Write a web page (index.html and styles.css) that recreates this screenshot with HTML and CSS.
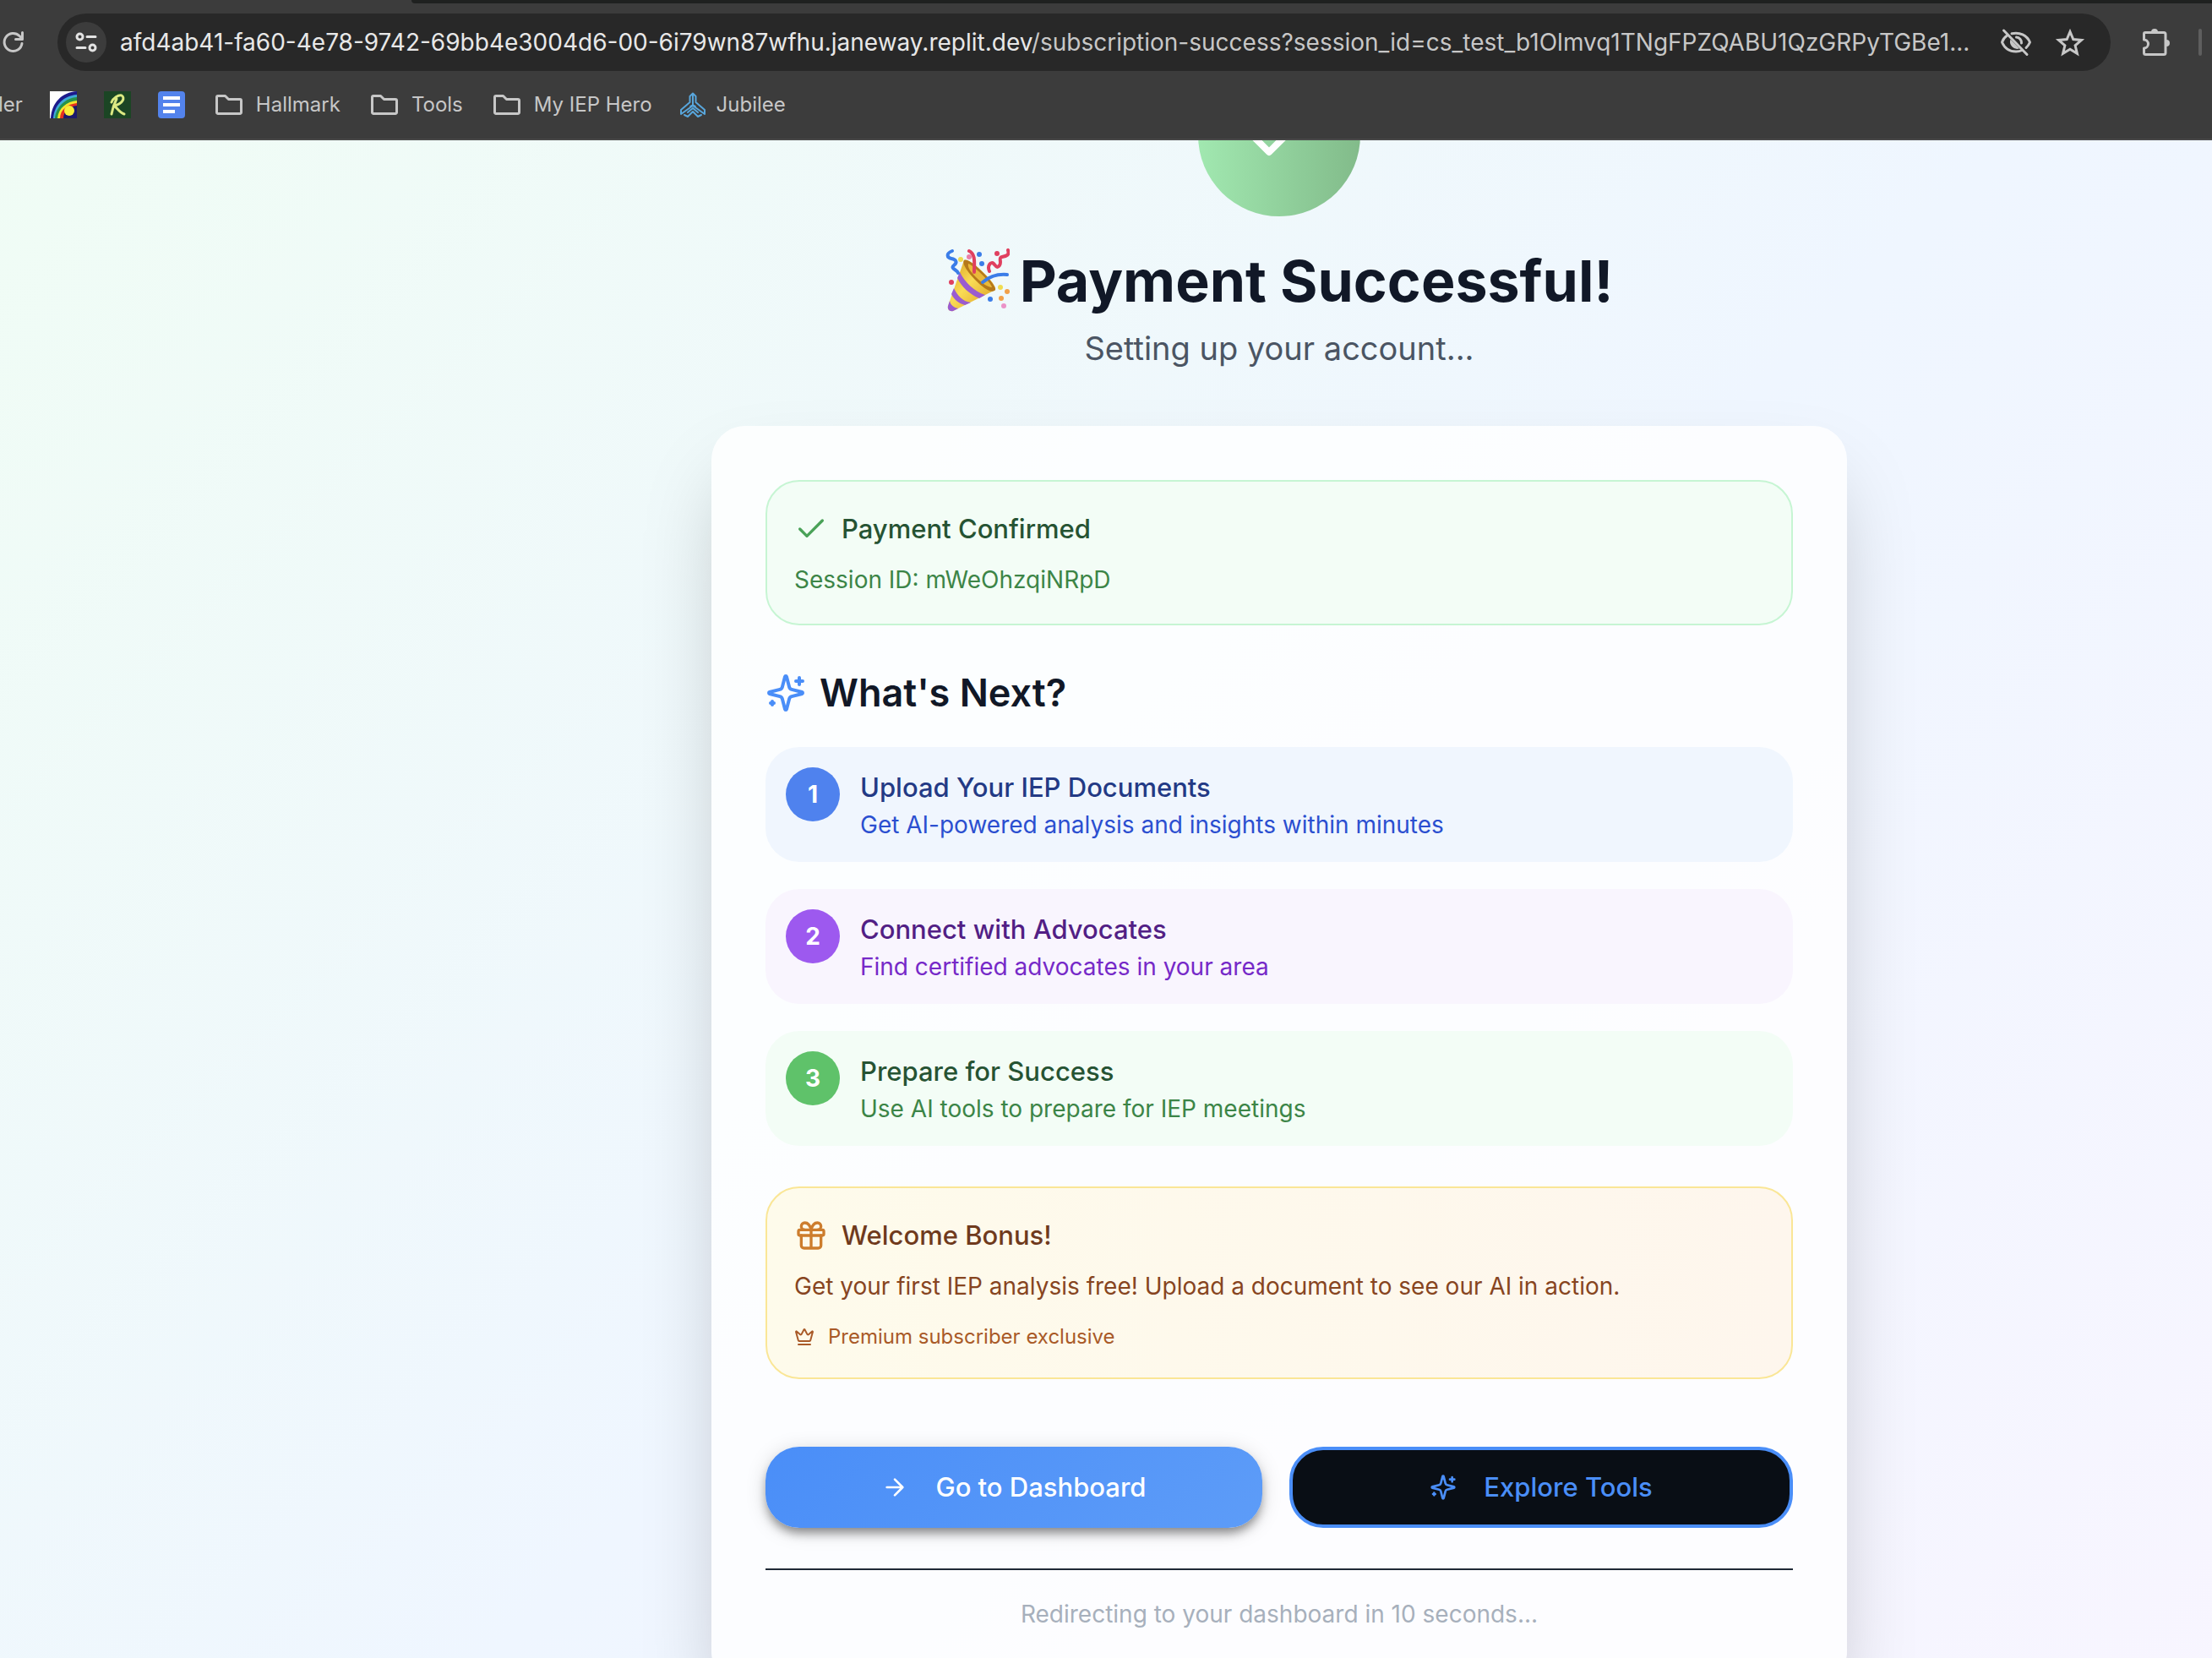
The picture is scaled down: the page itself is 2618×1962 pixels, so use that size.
FILE: index.html
```html
<!DOCTYPE html>
<html lang="en">
<head>
<meta charset="utf-8">
<title>Payment Successful</title>
<link rel="stylesheet" href="styles.css">
</head>
<body>
<svg class="sprite" aria-hidden="true">
  <symbol id="sparkles" viewBox="0 0 24 24">
    <path d="M9.937 15.5A2 2 0 0 0 8.5 14.063l-6.135-1.582a.5.5 0 0 1 0-.962L8.5 9.936A2 2 0 0 0 9.937 8.5l1.582-6.135a.5.5 0 0 1 .963 0L14.063 8.5A2 2 0 0 0 15.5 9.937l6.135 1.581a.5.5 0 0 1 0 .964L15.5 14.063a2 2 0 0 0-1.437 1.437l-1.582 6.135a.5.5 0 0 1-.963 0z"/>
    <path d="M20 3v4M22 5h-4M4 17v2M5 18H3"/>
  </symbol>
  <symbol id="check" viewBox="0 0 24 24"><path d="M20 6 9 17l-5-5"/></symbol>
  <symbol id="folder" viewBox="0 0 32 32"><path d="M3 5.500h8.500l4 4H29a1.500 1.500 0 0 1 1.500 1.500v14a1.500 1.500 0 0 1-1.500 1.500H3A1.500 1.500 0 0 1 1.500 25V7A1.500 1.500 0 0 1 3 5.500z"/></symbol>
</svg>

<header class="browser">
  <div class="tabstrip"></div>
  <div class="toolbar">
    <button class="tool reload" aria-label="Reload">
      <svg class="ico32 line3" viewBox="0 0 32 32"><path d="M26 17.500A10.500 10.500 0 1 1 23 8.500L26 11.500M26.500 4.500v8h-8"/></svg>
    </button>
    <div class="omnibox">
      <button class="siteinfo" aria-label="Site information">
        <svg class="ico32 line3" viewBox="0 0 32 32"><circle cx="8.500" cy="9.500" r="3.500"/><path d="M17 9.500h10M5 22.500h10"/><circle cx="23.500" cy="22.500" r="3.500"/></svg>
      </button>
      <div class="url"><span class="host">afd4ab41-fa60-4e78-9742-69bb4e3004d6-00-6i79wn87wfhu.janeway.replit.dev</span>/subscription-success?session_id=cs_test_b1Olmvq1TNgFPZQABU1QzGRPyTGBe1...</div>
      <button class="tool" aria-label="Third-party cookies blocked">
        <svg class="ico40 line3" viewBox="0 0 40 40"><path d="M9.500 12C6.500 14 4.500 17 3.500 20c3 7 9 11 16.500 11 2.500 0 5-.5 7-1.500M15 9.800c9-2.300 18 2 21.500 10.200-1 2.500-2.500 4.500-4.500 6.500M5.500 6 33 34.500"/><path class="solid" d="M13.500 16.500 24 27.500a8.500 8.500 0 0 1-10.500-11z"/><path d="M20.500 14a6.500 6.500 0 0 1 6 7"/></svg>
      </button>
      <button class="tool" aria-label="Bookmark this tab">
        <svg class="ico40 star" viewBox="0 0 40 40"><path d="m20 7.500 3.800 9 9.700.9-7.400 6.400 2.300 9.500-8.400-5.100-8.400 5.100 2.300-9.500-7.400-6.400 9.700-.9z"/></svg>
      </button>
    </div>
    <button class="tool extensions" aria-label="Extensions">
      <svg class="ico40 line3" viewBox="0 0 40 40"><path d="M7 8.500h22a2 2 0 0 1 2 2v22a2 2 0 0 1-2 2H7.500a2 2 0 0 1-2-2V27a5 5 0 0 0 0-10v-7A1.500 1.500 0 0 1 7 8.500z"/><path class="solid" d="M14 8a4 4 0 0 1 8 0zM32 17a4 4 0 0 1 0 8z"/></svg>
    </button>
    <span class="separator"></span>
  </div>
  <nav class="bookmarks" aria-label="Bookmarks">
    <a class="cut" href="#">ler</a>
    <a href="#" aria-label="Rainbow">
      <svg class="ico32 fill" viewBox="0 0 32 32"><path fill="#fff" d="M0 0h32v32H0z"/><path fill="#1c1a8c" d="M1 32C2 14 14 1 32 0v32z"/><path fill="#3fa9d8" d="M4 32C5 17 16 5 32 4v28z"/><path fill="#27934a" d="M6 32C7 19 18 8 32 7v25z"/><path fill="#f5e52c" d="M9 32c1-12 11-20 23-21v21z"/><path fill="#e5301f" d="M12 32c0-10 9-17 20-18v18z"/><path fill="#1c1a6c" d="M16 32c0-8 7-14 16-15v15z"/><circle cx="23" cy="23" r="6" fill="#f8ef3a"/></svg>
    </a>
    <a href="#" aria-label="R">
      <svg class="ico32" viewBox="0 0 32 32"><path fill="#1b4524" stroke="none" d="M0 0h32v32H0z"/><path stroke="#dcea83" stroke-width="3" d="M15 9c-3 6-5 12-6 18M9 13c2-5 8-9 12-8 4 2 2 10-9 12 4 3 6 8 12 10"/></svg>
    </a>
    <a href="#" aria-label="Document">
      <svg class="ico32 fill" viewBox="0 0 32 32"><rect width="32" height="32" rx="4" fill="#5383ec"/><path fill="#fff" d="M6 6h20v4H6zM6 14h20v4H6zM6 22h14v4H6z"/></svg>
    </a>
    <a class="labelled" href="#"><svg class="ico32 line3"><use href="#folder"/></svg>Hallmark</a>
    <a class="labelled" href="#"><svg class="ico32 line3"><use href="#folder"/></svg>Tools</a>
    <a class="labelled" href="#"><svg class="ico32 line3"><use href="#folder"/></svg>My IEP Hero</a>
    <a class="tight" href="#">
      <svg class="ico32 jubilee" viewBox="0 0 32 32"><path d="M16 3v13l-3 2M16 16l3 2M12.500 13V6L16 2.500 19.500 6v7L30 22v5l-7-5-7-5-7 5-7 5v-5l10.500-9M6 28l4 2 6-6 6 6 4-2M10 25l6-5 6 5"/></svg>Jubilee</a>
  </nav>
</header>

<main class="page">
  <div class="column">
    <div class="badge"><svg class="badge-icon"><use href="#check"/></svg></div>
    <h1 class="title">
      <svg class="party" viewBox="0 0 76 76" role="img" aria-label="Party popper">
        <defs><linearGradient id="cone" x1="0" y1="0" x2="1" y2="1"><stop offset="0" stop-color="#d79a1c"/><stop offset=".45" stop-color="#f9dc55"/><stop offset="1" stop-color="#d9961b"/></linearGradient></defs>
        <path fill="url(#cone)" d="M22 14C28 10 62 42 59 49L9 74C5 75 2 72 3 68z"/>
        <path fill="#b5791a" d="M22 14c6-5 39 29 37 35-4 5-14-2-23-11S19 18 22 14z"/>
        <path fill="#e9b93a" d="M27 18c6 2 27 22 28 28-5 0-12-5-19-12S26 22 27 18z"/>
        <path fill="#9a5bd0" d="M17 28c6 12 17 23 30 27l-7 4C28 54 19 45 14 35zM10 47c4 9 11 16 20 17l-7 3C15 65 10 60 7 54zM5 62c1 5 5 8 10 9l-6 3c-4 1-7-2-6-6z"/>
        <g fill="none" stroke-width="4" stroke-linecap="round"><path stroke="#e0405f" d="M28 3c8 4 6 14 6 25M52 27c-3-7 2-12 5-9s4 6 7 2-2-9 3-10 9-2 7-8"/><path stroke="#3b7de8" d="M8 3c-8 3-6 8-1 9s8 4 3 8 4 5 5 9M44 40c8-7 16-10 29-9"/></g>
        <g><circle cx="40" cy="7" r="3" fill="#3b7de8"/><circle cx="28" cy="10" r="3" fill="#eb7fa8"/><circle cx="18" cy="13" r="3" fill="#f0dc50"/><circle cx="43" cy="18" r="3" fill="#3b7de8"/><circle cx="61" cy="6" r="3" fill="#e0405f"/><circle cx="7" cy="40" r="3" fill="#e0405f"/><circle cx="65" cy="46" r="3" fill="#f0dc50"/><circle cx="73" cy="51" r="3" fill="#f2a04a"/><circle cx="53" cy="60" r="3" fill="#3b7de8"/><circle cx="66" cy="59" r="3" fill="#f2a04a"/><circle cx="69" cy="68" r="3" fill="#eb93c8"/></g>
      </svg>
      <span>Payment Successful!</span>
    </h1>
    <p class="subtitle">Setting up your account...</p>

    <section class="card">
      <div class="notice confirmed">
        <h2 class="notice-title"><svg class="ico40 line2"><use href="#check"/></svg>Payment Confirmed</h2>
        <p class="small">Session ID: mWeOhzqiNRpD</p>
      </div>

      <h2 class="next"><svg class="ico48 line2"><use href="#sparkles"/></svg>What's Next?</h2>
      <ol class="steps">
        <li class="step blue"><span class="num">1</span><div><h3>Upload Your IEP Documents</h3><p class="small">Get AI-powered analysis and insights within minutes</p></div></li>
        <li class="step purple"><span class="num">2</span><div><h3>Connect with Advocates</h3><p class="small">Find certified advocates in your area</p></div></li>
        <li class="step green"><span class="num">3</span><div><h3>Prepare for Success</h3><p class="small">Use AI tools to prepare for IEP meetings</p></div></li>
      </ol>

      <div class="notice bonus">
        <h2 class="notice-title">
          <svg class="ico40 line2" viewBox="0 0 24 24"><rect x="3" y="8" width="18" height="4" rx="1"/><path d="M12 8v13M19 12v7a2 2 0 0 1-2 2H7a2 2 0 0 1-2-2v-7M7.500 8a2.500 2.500 0 0 1 0-5A4.800 8 0 0 1 12 8a4.800 8 0 0 1 4.500-5 2.500 2.500 0 0 1 0 5"/></svg>Welcome Bonus!</h2>
        <p class="small">Get your first IEP analysis free! Upload a document to see our AI in action.</p>
        <p class="premium">
          <svg class="ico24 line2" viewBox="0 0 24 24"><path d="M11.562 3.266a.5.5 0 0 1 .876 0L15.390 8.870a1 1 0 0 0 1.516.294L21.183 5.500a.5.5 0 0 1 .798.519l-2.834 10.246a1 1 0 0 1-.956.734H5.810a1 1 0 0 1-.957-.734L2.020 6.020a.5.5 0 0 1 .798-.519l4.276 3.664a1 1 0 0 0 1.516-.294zM5 21h14"/></svg>Premium subscriber exclusive</p>
      </div>

      <div class="actions">
        <button class="btn primary"><svg class="ico32 line2" viewBox="0 0 24 24"><path d="M5 12h14M12 5l7 7-7 7"/></svg>Go to Dashboard</button>
        <button class="btn outline"><svg class="ico32 line2"><use href="#sparkles"/></svg>Explore Tools</button>
      </div>
      <p class="redirect">Redirecting to your dashboard in 10 seconds...</p>
    </section>
  </div>
</main>
</body>
</html>
```
FILE: styles.css
```css
* { box-sizing: border-box; margin: 0; padding: 0; }
html, body { height: 100%; }
body {
  display: flex;
  flex-direction: column;
  overflow: hidden;
  font-family: Inter, "Liberation Sans", sans-serif;
  font-size: 31px;
  line-height: 48px;
}
button { font: inherit; color: inherit; background: none; border: 0; }
a { color: inherit; text-decoration: none; }
svg { flex: none; fill: none; stroke: currentColor; stroke-linecap: round; stroke-linejoin: round; }
.sprite { position: absolute; width: 0; height: 0; }
.ico24 { width: 24px; height: 24px; }
.ico32 { width: 32px; height: 32px; }
.ico40 { width: 40px; height: 40px; }
.ico48 { width: 48px; height: 48px; }
.line2 { stroke-width: 2; }
.line3 { stroke-width: 3; }
.star { stroke-width: 3; stroke-linejoin: miter; }
.fill { stroke: none; }
.solid { fill: currentColor; stroke: none; }

/* Browser chrome */
.browser {
  position: relative;
  z-index: 1;
  flex: none;
  background: #3c3c3c;
  color: #c7c7c7;
  border-bottom: 2px solid #484848;
}
.tabstrip { height: 4px; margin-left: 487px; background: #1f2120; border-bottom-left-radius: 4px; }
.toolbar { display: flex; align-items: center; padding-top: 12px; }
.tool { display: flex; }
.reload { width: 68px; }
.omnibox {
  flex: 1;
  min-width: 0;
  height: 68px;
  display: flex;
  align-items: center;
  gap: 24px;
  padding: 0 28px 0 10px;
  border-radius: 34px;
  background: #282828;
}
.siteinfo { flex: none; display: grid; place-items: center; width: 48px; height: 48px; border-radius: 50%; background: #3c3c3c; color: #e3e3e3; }
.url { flex: 1; min-width: 0; margin-left: -8px; overflow: hidden; white-space: nowrap; font-size: 28px; line-height: 40px; }
.host { color: #e8e8e8; }
.extensions { margin-left: 34px; }
.separator { width: 4px; height: 32px; margin: 0 12px 0 30px; border-radius: 2px; background: #5e5e5e; }
.bookmarks { display: flex; align-items: center; gap: 32px; height: 80px; font-size: 24px; line-height: 32px; }
.bookmarks a { display: flex; align-items: center; gap: 16px; }
.bookmarks .labelled { margin-left: 4px; }
.bookmarks .tight { gap: 12px; }
.bookmarks .cut { margin-left: -2px; }
.jubilee { stroke: #58a6dc; stroke-width: 2; }

/* Page */
.page {
  flex: 1;
  min-height: 0;
  padding-left: 410px;
  background: linear-gradient(135deg, #f0fdf4 0%, #eff6ff 50%, #faf5ff 100%) 0 60% / 116% 120%;
}
.column { max-width: 1344px; margin: -102px auto 0; display: flex; flex-direction: column; align-items: center; }
.badge {
  display: grid;
  place-items: center;
  width: 192px;
  height: 192px;
  border-radius: 50%;
  background: linear-gradient(90deg, #a1e8b0, #82bb8a);
  color: #fff;
}
.badge-icon { width: 96px; height: 96px; stroke-width: 2; }
.title {
  display: flex;
  align-items: center;
  gap: 12px;
  margin: 32px 0 8px;
  font-size: 68px;
  line-height: 88px;
  font-weight: 700;
  color: #111827;
}
.party { width: 76px; height: 76px; stroke: none; }
.subtitle { font-size: 38px; line-height: 56px; color: #4b5563; }
.card {
  width: 100%;
  margin-top: 64px;
  padding: 64px;
  border-radius: 40px;
  background: rgba(255, 255, 255, .8);
  box-shadow: 0 50px 100px -24px rgba(0, 0, 0, .25);
}
.small { font-size: 28px; line-height: 40px; }
.notice { padding: 32px; border: 2px solid; border-radius: 40px; }
.notice-title { display: flex; align-items: center; gap: 16px; margin-bottom: 16px; font-size: 31px; line-height: 48px; font-weight: 500; }
.confirmed { background: #f3fdf6; border-color: #c6f5d3; color: #3c8547; }
.confirmed .notice-title { color: #265333; }
.confirmed svg { color: #4aa258; }
.next { display: flex; align-items: center; gap: 16px; margin: 48px 0 32px; font-size: 45px; line-height: 64px; font-weight: 600; color: #111827; }
.next svg { color: #4a8ef8; }
.steps { display: flex; flex-direction: column; gap: 32px; list-style: none; }
.step { display: flex; gap: 24px; padding: 24px; border-radius: 40px; }
.step h3 { font-size: 31px; line-height: 48px; font-weight: 500; }
.num { display: grid; place-items: center; width: 64px; height: 64px; border-radius: 50%; color: #fff; font-size: 28px; line-height: 40px; font-weight: 700; }
.blue { background: #f0f6fe; color: #2b4fd0; }
.blue h3 { color: #233a85; }
.blue .num { background: #4f82ee; }
.purple { background: #f9f5fe; color: #7629c8; }
.purple h3 { color: #521f85; }
.purple .num { background: #9d59ef; }
.green { background: #f3fdf6; color: #3c8547; }
.green h3 { color: #265333; }
.green .num { background: #5fc26a; }
.bonus { margin-top: 48px; background: linear-gradient(90deg, #fefbeb, #fef6ed); border-color: #fae696; color: #87451f; }
.bonus .notice-title { color: #6f3a1d; }
.bonus .notice-title svg { color: #cd7d2d; }
.premium { display: flex; align-items: center; gap: 16px; margin-top: 24px; font-size: 24px; line-height: 32px; color: #a95a28; }
.actions { display: flex; gap: 32px; margin: 80px 0 48px; }
.btn { flex: 1; height: 96px; display: flex; align-items: center; justify-content: center; gap: 32px; border-radius: 40px; font-weight: 500; }
.primary { background: linear-gradient(135deg, #4a8ef8, #5d9cf8); color: #fff; box-shadow: 0 8px 12px -2px rgba(0, 0, 0, .4), 0 4px 24px rgba(0, 0, 0, .15); }
.outline { background: #090e15; border: 4px solid #4a8ef8; color: #4a8ef8; }
.redirect { padding-top: 32px; border-top: 2px solid #1f2937; font-size: 28px; line-height: 40px; text-align: center; color: #a7b0bc; }
```
